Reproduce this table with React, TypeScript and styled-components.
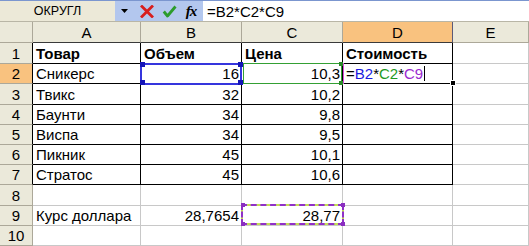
import React from 'react';
import styled, { createGlobalStyle } from 'styled-components';

const Global = createGlobalStyle`
  html, body { margin: 0; padding: 0; background: #fff; }
  body { font-family: "Liberation Sans", Arial, sans-serif; }
`;

const DARK = '#000';
const GRID = '#c8c8c8';
const HEAD_LINE = '#aca899';
const HEAD_BG = '#ebe9da';
const SEL_BG = '#f9c27f';

const Frame = styled.div`
  width: 529px;
  height: 246px;
  overflow: hidden;
  background: #fff;
  display: flex;
  flex-direction: column;
`;

const FormulaBar = styled.div`
  display: flex;
  height: 22px;
  flex: none;
  box-sizing: border-box;
  border-top: 1px solid #7b96cf;
  border-bottom: 1px solid #b9b6a6;
`;

const NameBox = styled.div`
  width: 115px;
  background: #ece9d8;
  display: flex;
  align-items: center;
  justify-content: center;
  font-size: 12.5px;
  color: #000;
`;

const ButtonStrip = styled.div`
  width: 88px;
  background: #b3c7ee;
  display: flex;
  align-items: center;
`;

const Slot = styled.div<{ $w: number }>`
  width: ${p => p.$w}px;
  height: 100%;
  display: flex;
  align-items: center;
  justify-content: center;
`;

const Fx = styled.span`
  font-family: "Liberation Serif", "Times New Roman", serif;
  font-style: italic;
  font-weight: 700;
  font-size: 15px;
  letter-spacing: -1px;
  color: #000;
`;

const FormulaInput = styled.div`
  flex: 1;
  background: #fff;
  display: flex;
  align-items: center;
  padding-left: 4px;
  font-size: 15px;
  color: #000;
`;

const Sheet = styled.div`
  display: grid;
  grid-template-columns: 33px 108px 101px 101px 110px 76px;
  grid-template-rows: 21px 21px 20px 21px 20px 20px 20px 20px 21px 20px 20px;
`;

const Corner = styled.div`
  box-sizing: border-box;
  background: ${HEAD_BG};
  border-right: 1px solid ${HEAD_LINE};
  border-bottom: 1px solid ${HEAD_LINE};
`;

const ColHead = styled.div<{ $sel?: boolean; $dark?: boolean }>`
  box-sizing: border-box;
  background: ${p => (p.$sel ? SEL_BG : HEAD_BG)};
  border-right: 1px solid ${p => (p.$sel ? '#5c5a78' : HEAD_LINE)};
  border-bottom: 1px solid ${p => (p.$dark ? '#3a3a3a' : HEAD_LINE)};
  display: flex;
  align-items: center;
  justify-content: center;
  font-size: 15px;
  color: #000;
`;

const RowHead = styled.div<{ $sel?: boolean; $dark?: boolean }>`
  box-sizing: border-box;
  background: ${p => (p.$sel ? SEL_BG : HEAD_BG)};
  border-right: 1px solid ${p => (p.$dark ? DARK : HEAD_LINE)};
  border-bottom: 1px solid ${HEAD_LINE};
  display: flex;
  align-items: center;
  justify-content: center;
  font-size: 15px;
  color: #000;
`;

const Cell = styled.div<{ $r: string; $b: string; $right?: boolean; $bold?: boolean }>`
  position: relative;
  box-sizing: border-box;
  border-right: 1px solid ${p => p.$r};
  border-bottom: 1px solid ${p => p.$b};
  display: flex;
  align-items: center;
  justify-content: ${p => (p.$right ? 'flex-end' : 'flex-start')};
  padding: 0 2px 0 3px;
  font-size: 15px;
  font-weight: ${p => (p.$bold ? 700 : 400)};
  white-space: nowrap;
  color: #000;
`;

const RangeBox = styled.div<{ $c: string; $w: number; $inset: string }>`
  position: absolute;
  inset: ${p => p.$inset};
  box-shadow: inset 0 0 0 ${p => p.$w}px ${p => p.$c};
  pointer-events: none;
`;

const DashedBox = styled.div`
  position: absolute;
  inset: -2px -2px 0 -1px;
  box-shadow: inset 0 0 0 2px #c4de55;
  &::before {
    content: '';
    position: absolute;
    inset: 0;
    border: 2px dashed #9030c8;
  }
`;

const Handle = styled.div<{ $c: string; $pos: string; $s?: number }>`
  position: absolute;
  width: ${p => p.$s ?? 5}px;
  height: ${p => p.$s ?? 5}px;
  background: ${p => p.$c};
  ${p => p.$pos}
  z-index: 2;
`;

const EditLine = styled.div`
  position: absolute;
  left: 0;
  top: -1px;
  bottom: -1px;
  width: 1px;
  background: #d850d8;
`;

const FillHandle = styled.div`
  position: absolute;
  right: -4px;
  bottom: -3px;
  width: 4px;
  height: 4px;
  background: #000;
  border: 1px solid #fff;
  z-index: 3;
`;

const Ref = styled.span<{ $c: string }>`
  color: ${p => p.$c};
`;

const Caret = styled.span`
  display: inline-block;
  width: 1px;
  height: 15px;
  background: #000;
  margin-left: 1px;
  vertical-align: -2px;
`;

type CellData = { t?: string; right?: boolean; bold?: boolean };

const rows: CellData[][] = [
  [{ t: 'Товар', bold: true }, { t: 'Объем', bold: true }, { t: 'Цена', bold: true }, { t: 'Стоимость', bold: true }, {}],
  [{ t: 'Сникерс' }, { t: '16', right: true }, { t: '10,3', right: true }, {}, {}],
  [{ t: 'Твикс' }, { t: '32', right: true }, { t: '10,2', right: true }, {}, {}],
  [{ t: 'Баунти' }, { t: '34', right: true }, { t: '9,8', right: true }, {}, {}],
  [{ t: 'Виспа' }, { t: '34', right: true }, { t: '9,5', right: true }, {}, {}],
  [{ t: 'Пикник' }, { t: '45', right: true }, { t: '10,1', right: true }, {}, {}],
  [{ t: 'Стратос' }, { t: '45', right: true }, { t: '10,6', right: true }, {}, {}],
  [{}, {}, {}, {}, {}],
  [{ t: 'Курс доллара' }, { t: '28,7654', right: true }, { t: '28,77', right: true }, {}, {}],
  [{}, {}, {}, {}, {}],
];

const COLS = ['A', 'B', 'C', 'D', 'E'];

const CancelIcon = () => (
  <svg width="14" height="13" viewBox="0 0 14 13">
    <path d="M2 1.5 L12 11.5 M12 1.5 L2 11.5" stroke="#d81e1e" strokeWidth="2.8" strokeLinecap="square" fill="none" />
  </svg>
);

const EnterIcon = () => (
  <svg width="15" height="13" viewBox="0 0 15 13">
    <path d="M1.8 6.5 L5.5 11 L13.5 1.5" stroke="#2c9c2c" strokeWidth="2.8" fill="none" strokeLinejoin="round" />
  </svg>
);

const DropArrow = () => (
  <svg width="7" height="4" viewBox="0 0 7 4">
    <path d="M0 0 H7 L3.5 4 Z" fill="#000" />
  </svg>
);

function extras(r: number, c: number) {
  if (r === 1 && c === 1) {
    return (
      <RangeBox $c="#3535dd" $w={2} $inset="-1px -1px -2px -1px">
        <Handle $c="#1414b8" $pos="left:0;top:-1px;" />
        <Handle $c="#1414b8" $pos="right:-1px;top:-1px;" />
        <Handle $c="#1414b8" $pos="left:0;bottom:0;" />
        <Handle $c="#1414b8" $pos="right:-1px;bottom:0;" />
      </RangeBox>
    );
  }
  if (r === 1 && c === 2) {
    return (
      <RangeBox $c="#34a034" $w={1} $inset="-1px 0 -1px 1px">
        <Handle $c="#2a8a2a" $s={4} $pos="right:-1px;top:-1px;" />
        <Handle $c="#2a8a2a" $s={4} $pos="right:-1px;bottom:-1px;" />
      </RangeBox>
    );
  }
  if (r === 1 && c === 3) {
    return (
      <>
        <EditLine />
        <FillHandle />
      </>
    );
  }
  if (r === 8 && c === 2) {
    return (
      <DashedBox>
        <Handle $c="#8a2ec0" $s={4} $pos="left:0;top:-1px;" />
        <Handle $c="#8a2ec0" $s={4} $pos="right:-1px;top:-1px;" />
        <Handle $c="#8a2ec0" $s={4} $pos="left:0;bottom:-1px;" />
        <Handle $c="#8a2ec0" $s={4} $pos="right:-1px;bottom:-1px;" />
      </DashedBox>
    );
  }
  return null;
}

function content(r: number, c: number, d: CellData) {
  if (r === 1 && c === 3) {
    return (
      <span>
        =<Ref $c="#1a1ae0">B2</Ref>*<Ref $c="#1f9a1f">C2</Ref>*<Ref $c="#9a2ad0">C9</Ref>
        <Caret />
      </span>
    );
  }
  return d.t;
}

export default function App() {
  return (
    <>
      <Global />
      <Frame>
        <FormulaBar>
          <NameBox>ОКРУГЛ</NameBox>
          <ButtonStrip>
            <Slot $w={19}><DropArrow /></Slot>
            <Slot $w={26}><CancelIcon /></Slot>
            <Slot $w={19}><EnterIcon /></Slot>
            <Slot $w={24}><Fx>fx</Fx></Slot>
          </ButtonStrip>
          <FormulaInput>=B2*C2*C9</FormulaInput>
        </FormulaBar>
        <Sheet>
          <Corner />
          {COLS.map((col, i) => (
            <ColHead key={col} $sel={col === 'D'} $dark={i < 4}>{col}</ColHead>
          ))}
          {rows.map((row, r) => (
            <React.Fragment key={r}>
              <RowHead $sel={r === 1} $dark={r < 7}>{r + 1}</RowHead>
              {row.map((d, c) => {
                const inTable = r < 7 && c < 4;
                return (
                  <Cell
                    key={c}
                    $r={inTable ? DARK : GRID}
                    $b={inTable ? DARK : GRID}
                    $right={d.right}
                    $bold={d.bold}
                  >
                    {content(r, c, d)}
                    {extras(r, c)}
                  </Cell>
                );
              })}
            </React.Fragment>
          ))}
        </Sheet>
      </Frame>
    </>
  );
}
